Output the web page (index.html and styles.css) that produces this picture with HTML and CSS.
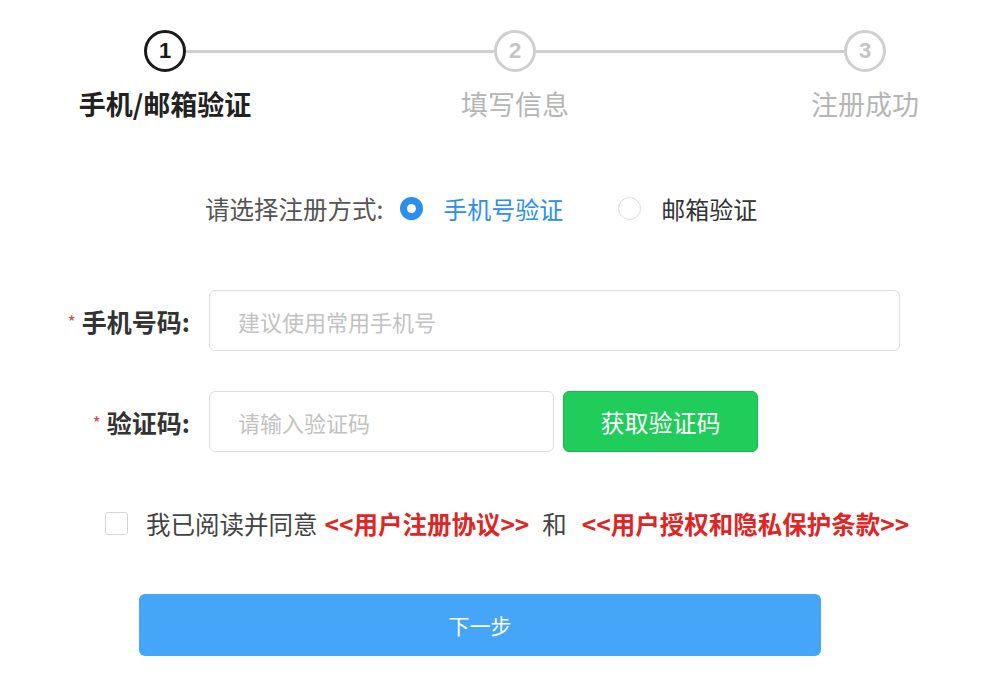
FILE: index.html
```html
<!DOCTYPE html>
<html lang="zh-CN">
<head>
<meta charset="utf-8">
<title>注册</title>
<link rel="stylesheet" href="styles.css">
</head>
<body>
<div class="page">
  <div class="steps">
    <div class="step active">
      <div class="step-circle">1</div>
      <div class="step-label">手机/邮箱验证</div>
    </div>
    <div class="step">
      <div class="step-circle">2</div>
      <div class="step-label">填写信息</div>
    </div>
    <div class="step last">
      <div class="step-circle">3</div>
      <div class="step-label">注册成功</div>
    </div>
  </div>

  <div class="method">
    <span class="method-label">请选择注册方式:</span>
    <span class="radio checked"></span>
    <span class="radio-text selected">手机号验证</span>
    <span class="radio unchecked"></span>
    <span class="radio-text">邮箱验证</span>
  </div>

  <div class="form-row">
    <label class="form-label"><span class="req">*</span>手机号码:</label>
    <div class="input wide">建议使用常用手机号</div>
  </div>

  <div class="form-row">
    <label class="form-label"><span class="req">*</span>验证码:</label>
    <div class="input short">请输入验证码</div>
    <button class="code-btn">获取验证码</button>
  </div>

  <div class="agree">
    <span class="checkbox"></span>
    <span class="agree-text">我已阅读并同意</span>
    <span class="link">&lt;&lt;用户注册协议&gt;&gt;</span>
    <span class="and">和</span>
    <span class="link">&lt;&lt;用户授权和隐私保护条款&gt;&gt;</span>
  </div>

  <div class="submit-row">
    <button class="next-btn">下一步</button>
  </div>
</div>
</body>
</html>
```

FILE: styles.css
```css
* { box-sizing: border-box; }
html, body { margin: 0; padding: 0; background: #fff; }
body {
  font-family: "Noto Sans CJK SC", "Noto Sans", "Liberation Sans", sans-serif;
  color: #333;
}
.page { width: 994px; height: 686px; overflow: hidden; }

.steps {
  display: grid;
  grid-template-columns: repeat(3, 200px);
  column-gap: 150px;
  padding-left: 65px;
  padding-top: 30px;
}
.step {
  position: relative;
  display: flex;
  flex-direction: column;
  align-items: center;
}
.step::after {
  content: "";
  position: absolute;
  left: calc(50% + 21px);
  top: 20px;
  width: 308px;
  height: 3px;
  background: #cfcfcf;
}
.step.last::after { display: none; }
.step-circle {
  width: 42px;
  height: 42px;
  border-radius: 50%;
  border: 3px solid #cfcfcf;
  color: #c4c4c4;
  font-family: "Liberation Sans", "Noto Sans", sans-serif;
  font-size: 22px;
  font-weight: 700;
  display: flex;
  align-items: center;
  justify-content: center;
  line-height: 1;
}
.step.active .step-circle { border-color: #1a1a1a; color: #1a1a1a; }
.step-label {
  margin-top: 13px;
  font-size: 27px;
  line-height: 38px;
  color: #b5b5b5;
  white-space: nowrap;
}
.step.active .step-label { color: #222; font-weight: 700; }

.method {
  display: flex;
  align-items: center;
  padding-left: 205px;
  margin-top: 68px;
  height: 34px;
  font-size: 24px;
}
.method-label { color: #555; margin-right: 17px; font-size: 24.5px; }
.radio {
  width: 23px;
  height: 23px;
  border-radius: 50%;
  flex: none;
}
.radio.checked { border: 7.5px solid #2b8ef0; background: #fff; }
.radio.unchecked { border: 1.5px solid #dcdcdc; margin-left: 55px; }
.radio-text { margin-left: 20px; font-size: 24px; color: #333; }
.radio-text.selected { color: #2b8ef0; }

.form-row {
  display: flex;
  align-items: center;
  margin-top: 65px;
  height: 61px;
}
.form-row + .form-row { margin-top: 40px; }
.form-label {
  width: 190px;
  flex: none;
  text-align: right;
  font-size: 25px;
  font-weight: 700;
  color: #333;
  margin-right: 19px;
}
.req {
  color: #e04848;
  font-size: 18px;
  font-weight: 400;
  margin-right: 6px;
  position: relative;
  top: -3px;
}
.input {
  height: 61px;
  border: 1.5px solid #dedede;
  border-radius: 6px;
  padding-left: 28px;
  display: flex;
  align-items: center;
  font-size: 22px;
  color: #c2c2c2;
}
.input.wide { width: 691px; }
.input.short { width: 345px; }
.code-btn {
  margin-left: 9px;
  width: 195px;
  height: 61px;
  border: 1px solid #17b94c;
  border-radius: 6px;
  background: #20cc5a;
  color: #fff;
  font-family: inherit;
  font-size: 24px;
  padding: 0;
}

.agree {
  display: flex;
  align-items: center;
  margin-top: 59px;
  padding-left: 105px;
  height: 24px;
  font-size: 24.5px;
  white-space: nowrap;
}
.checkbox {
  width: 23px;
  height: 23px;
  border: 1.5px solid #d6d6d6;
  border-radius: 3px;
  flex: none;
  margin-right: 18px;
}
.agree-text { color: #444; }
.link { color: #e02525; font-weight: 700; margin-left: 7px; font-size: 24.5px; }
.and { color: #444; margin: 0 8px 0 13px; }

.submit-row {
  margin-top: 59px;
  padding-left: 139px;
}
.next-btn {
  width: 682px;
  height: 62px;
  border: none;
  border-radius: 6px;
  background: #45a5f9;
  color: #fff;
  font-family: inherit;
  font-size: 21px;
  padding: 0;
}
```
